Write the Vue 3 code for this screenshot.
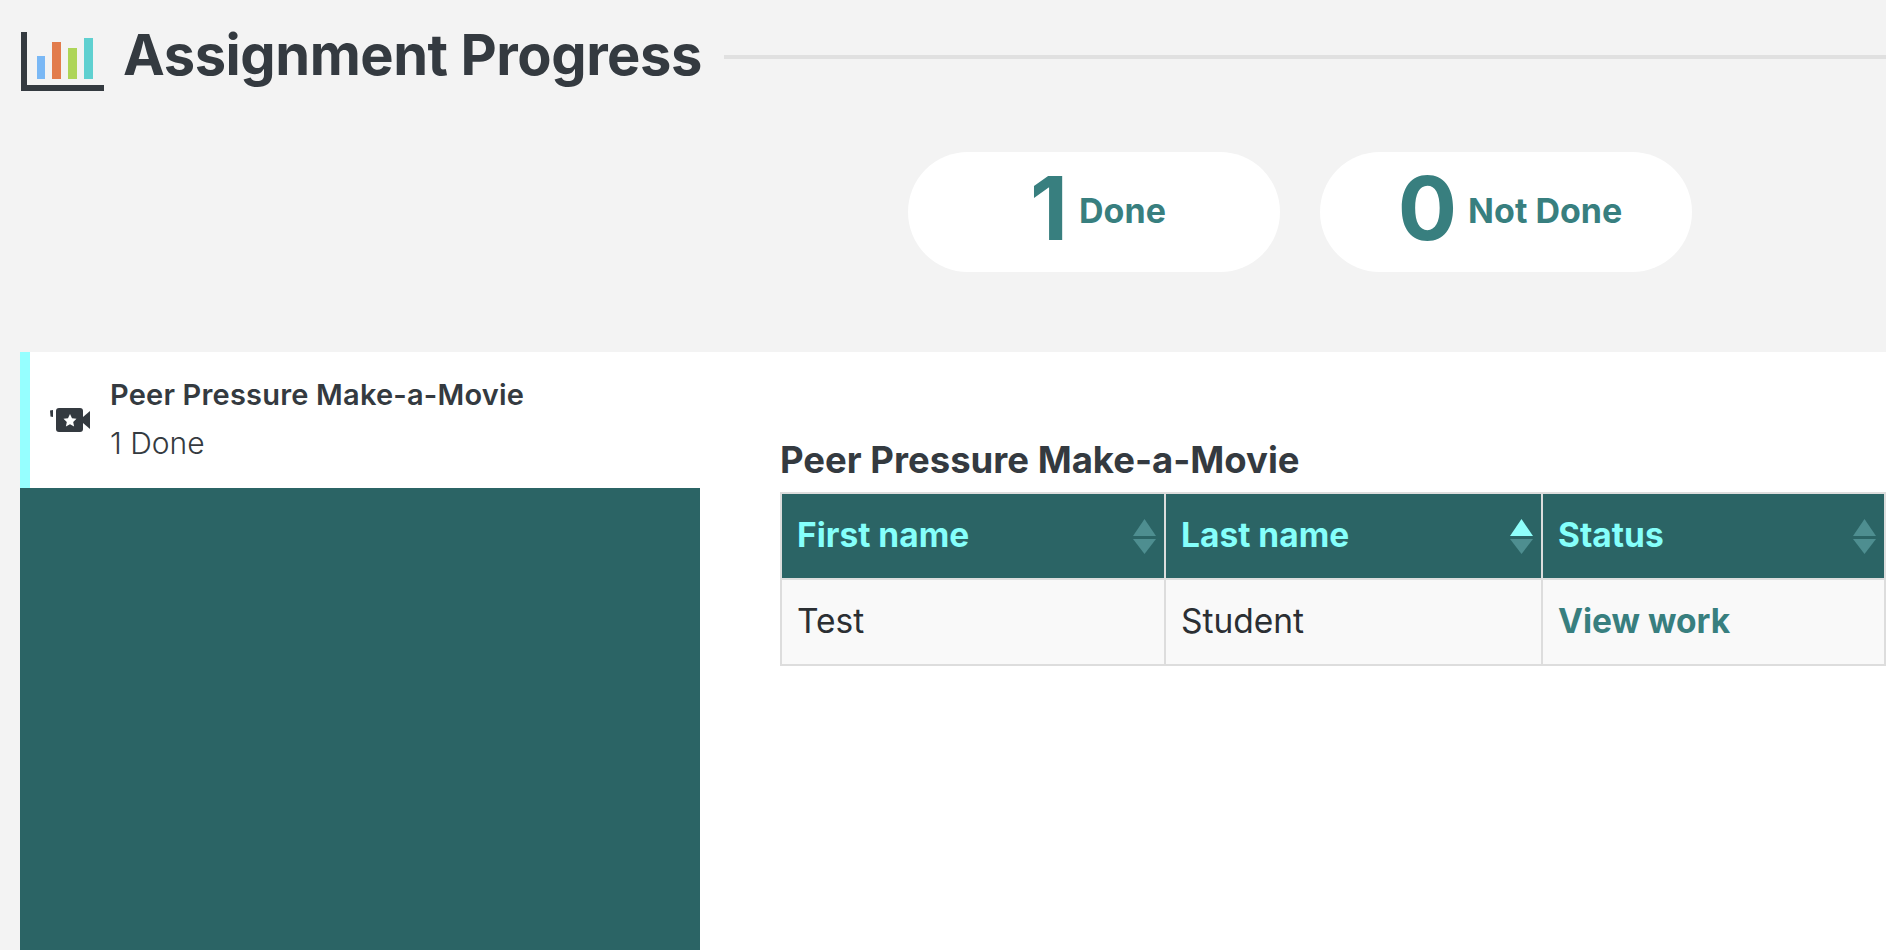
<script setup>
const columns = [
  { label: 'First name', sort: 'none' },
  { label: 'Last name', sort: 'asc' },
  { label: 'Status', sort: 'none' }
]
const stats = [
  { value: '1', label: 'Done' },
  { value: '0', label: 'Not Done' }
]
</script>

<template>
  <div class="page">
    <header class="head">
      <svg class="chart" width="83" height="66" viewBox="0 0 83 66">
        <rect x="0" y="7" width="6" height="59" fill="#343a40" />
        <rect x="0" y="60" width="83" height="6" fill="#343a40" />
        <rect x="16" y="31" width="8" height="23" fill="#7ab8f5" />
        <rect x="31" y="17" width="9" height="37" fill="#e27c4c" />
        <rect x="47" y="23" width="9" height="31" fill="#aed558" />
        <rect x="63" y="13" width="9" height="41" fill="#5fd0d0" />
      </svg>
      <h1 class="title">Assignment Progress</h1>
      <div class="rule"></div>
    </header>

    <section class="stats">
      <div v-for="s in stats" :key="s.label" class="pill">
        <span class="num">{{ s.value }}</span>
        <span class="lbl">{{ s.label }}</span>
      </div>
    </section>

    <section class="panel">
      <aside class="side">
        <div class="item">
          <svg class="cam" width="41" height="24" viewBox="0 0 41 24">
            <path d="M1 2.5 L4 2 V9 L1.5 8.5 Z" fill="#343a40" />
            <rect x="7" y="0" width="27" height="24" rx="3" fill="#343a40" />
            <path d="M34 9 L41 3 V21 L34 15 Z" fill="#343a40" />
            <path d="M21 6 L23 10.3 L27.5 10.8 L24.2 14 L25.1 18.5 L21 16.2 L16.9 18.5 L17.8 14 L14.5 10.8 L19 10.3 Z" fill="#fff" />
          </svg>
          <div class="item-text">
            <div class="item-title">Peer Pressure Make-a-Movie</div>
            <div class="item-sub">1 Done</div>
          </div>
        </div>
        <div class="fill"></div>
      </aside>

      <main class="content">
        <h2 class="heading">Peer Pressure Make-a-Movie</h2>
        <table class="grid">
          <colgroup>
            <col class="c1" />
            <col class="c2" />
            <col class="c3" />
          </colgroup>
          <thead>
            <tr>
              <th v-for="c in columns" :key="c.label">
                <div class="th-in">
                  <span class="th-label">{{ c.label }}</span>
                  <svg class="sort" width="23" height="35" viewBox="0 0 23 35">
                    <path d="M11.5 0 L23 17 H0 Z" :class="c.sort === 'asc' ? 'on' : 'off'" />
                    <path d="M0 20 H23 L11.5 35 Z" class="off" />
                  </svg>
                </div>
              </th>
            </tr>
          </thead>
          <tbody>
            <tr>
              <td>Test</td>
              <td>Student</td>
              <td><a class="link">View work</a></td>
            </tr>
          </tbody>
        </table>
      </main>
    </section>
  </div>
</template>

<style>
html, body { margin: 0; background: #f3f3f3; overflow: hidden; }
</style>

<style scoped>
.page {
  height: 950px;
  overflow: hidden;
  background: #f3f3f3;
  color: #343a40;
  font-family: "Inter", "Liberation Sans", sans-serif;
}
.head {
  display: flex;
  align-items: flex-start;
  height: 66px;
  padding: 25px 0 0 21px;
}
.chart { flex: none; }
.title {
  margin: -3px 0 0 19px;
  font-size: 56px;
  line-height: 66px;
  font-weight: 700;
  letter-spacing: -0.45px;
  white-space: nowrap;
}
.rule {
  flex: 1;
  height: 4px;
  margin: 30px 0 0 22px;
  background: #e0e0e0;
}
.stats {
  display: flex;
  gap: 40px;
  margin-top: 61px;
  padding-left: 908px;
}
.pill {
  box-sizing: border-box;
  width: 372px;
  height: 120px;
  padding-left: 8px;
  border-radius: 60px;
  background: #fff;
  display: flex;
  align-items: center;
  justify-content: center;
  gap: 11px;
  color: #387f7f;
  font-weight: 700;
}
.num { font-size: 88px; line-height: 112px; margin-bottom: 8px; }
.lbl { font-size: 34px; line-height: 118px; margin-bottom: 2px; }
.panel {
  display: flex;
  height: 598px;
  margin: 80px 0 0 20px;
  background: #fff;
}
.side {
  width: 680px;
  flex: none;
  display: flex;
  flex-direction: column;
}
.item {
  box-sizing: border-box;
  height: 136px;
  border-left: 10px solid #96ffff;
  padding-left: 19px;
  display: flex;
  align-items: center;
  gap: 20px;
}
.cam { flex: none; }
.item-text { margin-top: -2px; }
.item-title { font-size: 29px; letter-spacing: 0.2px; font-weight: 600; line-height: 48px; }
.item-sub { font-size: 30px; font-weight: 300; line-height: 48px; }
.fill { flex: 1; background: #2b6465; }
.content { flex: 1; padding-left: 80px; min-width: 0; }
.heading {
  margin: 0;
  padding-top: 82px;
  height: 58px;
  font-size: 36.5px;
  line-height: 52px;
  font-weight: 700;
}
.grid {
  width: 1106px;
  box-sizing: border-box;
  table-layout: fixed;
  border-collapse: separate;
  border-spacing: 0;
  border-top: 2px solid #ddd;
  border-left: 2px solid #ddd;
  font-size: 33.5px;
}
.c1 { width: 384px; }
.c2 { width: 377px; }
.c3 { width: 343px; }
th, td {
  box-sizing: border-box;
  height: 86px;
  padding: 0 8px 0 15px;
  border-right: 2px solid #ddd;
  border-bottom: 2px solid #ddd;
  text-align: left;
}
th {
  background: #2b6465;
  color: #85fffb;
  font-weight: 700;
}
td {
  padding-bottom: 3px;
  background: #f9f9f9;
  color: #2b2f33;
  font-weight: 400;
}
.th-in {
  display: flex;
  align-items: center;
  justify-content: space-between;
}
.th-label { margin-bottom: 2px; }
.sort { flex: none; }
.on { fill: #8ffffb; }
.off { fill: #4e8e90; }
.link { color: #387f7f; font-weight: 700; }
</style>
